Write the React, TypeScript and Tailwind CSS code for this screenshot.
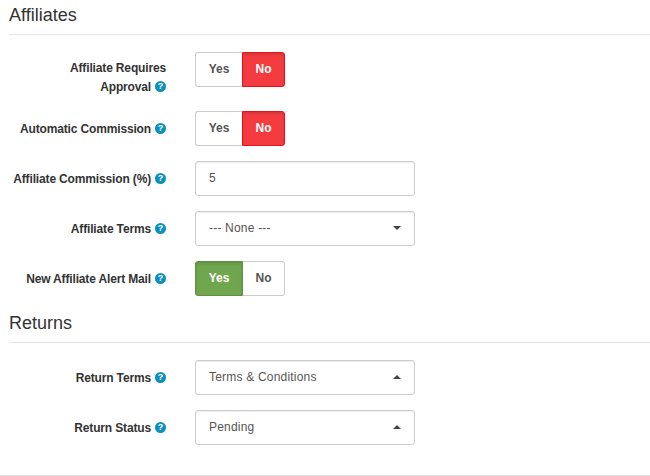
function Help() {
  return (
    <span className="inline-flex align-top mt-[3px] ml-[4px] w-[11px] h-[11px] rounded-full bg-[#0c8fbc] items-center justify-center text-white text-[9px] leading-none font-bold tracking-normal">
      ?
    </span>
  )
}

function Toggle({ on }: { on: boolean }) {
  return (
    <div className="flex w-[90px] h-[35px] text-[12px] font-bold">
      {on ? (
        <>
          <div className="w-[48px] flex items-center justify-center rounded-l-[3px] border border-[#5f8f40] bg-[#70a64e] text-white pb-[2px] shadow-[inset_0_2px_3px_rgba(0,0,0,0.12)]">
            Yes
          </div>
          <div className="flex-1 flex items-center justify-center rounded-r-[3px] border border-l-0 border-[#cccccc] bg-white text-[#555555] pb-[2px]">
            No
          </div>
        </>
      ) : (
        <>
          <div className="w-[47px] flex items-center justify-center rounded-l-[3px] border border-r-0 border-[#cccccc] bg-white text-[#555555] pb-[2px]">
            Yes
          </div>
          <div className="flex-1 flex items-center justify-center rounded-r-[3px] border border-[#e5141a] bg-[#f43c40] text-white pb-[2px] shadow-[inset_0_2px_3px_rgba(0,0,0,0.12)]">
            No
          </div>
        </>
      )}
    </div>
  )
}

function Box({ value, arrow }: { value: string; arrow?: 'up' | 'down' }) {
  return (
    <div className="w-[220px] h-[35px] flex items-center justify-between px-[13px] pb-[2px] rounded-[3px] border border-[#cccccc] bg-white text-[12px] tracking-[0.2px] text-[#555555] shadow-[inset_0_1px_1px_rgba(0,0,0,0.075)]">
      <span>{value}</span>
      {arrow === 'down' && (
        <span className="w-0 h-0 border-x-[4px] border-x-transparent border-t-[4px] border-t-[#444444]" />
      )}
      {arrow === 'up' && (
        <span className="w-0 h-0 border-x-[4px] border-x-transparent border-b-[4px] border-b-[#444444]" />
      )}
    </div>
  )
}

function Row({ first, label, children }: { first?: string; label: string; children: React.ReactNode }) {
  return (
    <div className="flex mb-[15px]">
      <div className={`w-[157px] text-right text-[12px] tracking-[-0.15px] leading-[18.5px] font-bold text-[#333333] ${first ? 'pt-[7px]' : 'pt-[9px]'}`}>
        {first && <div>{first}</div>}
        <div>
          {label}
          <Help />
        </div>
      </div>
      <div className="ml-[29px]">{children}</div>
    </div>
  )
}

function Heading({ children }: { children: React.ReactNode }) {
  return (
    <h2 className="text-[18px] leading-[20px] text-[#333333] border-b border-[#e5e5e5] pb-[9px] mb-[17px]">
      {children}
    </h2>
  )
}

export default function App() {
  return (
    <div className="w-[650px] h-[476px] overflow-hidden bg-white pl-[9px] pt-[5px] font-['Liberation_Sans',Arial,sans-serif] border-b border-[#e5e5e5]">
      <Heading>Affiliates</Heading>
      <Row first="Affiliate Requires" label="Approval">
        <Toggle on={false} />
      </Row>
      <Row label="Automatic Commission">
        <Toggle on={false} />
      </Row>
      <Row label="Affiliate Commission (%)">
        <Box value="5" />
      </Row>
      <Row label="Affiliate Terms">
        <Box value="--- None ---" arrow="down" />
      </Row>
      <Row label="New Affiliate Alert Mail">
        <Toggle on={true} />
      </Row>
      <div className="pt-[2px]">
        <Heading>Returns</Heading>
      </div>
      <Row label="Return Terms">
        <Box value="Terms & Conditions" arrow="up" />
      </Row>
      <Row label="Return Status">
        <Box value="Pending" arrow="up" />
      </Row>
    </div>
  )
}
